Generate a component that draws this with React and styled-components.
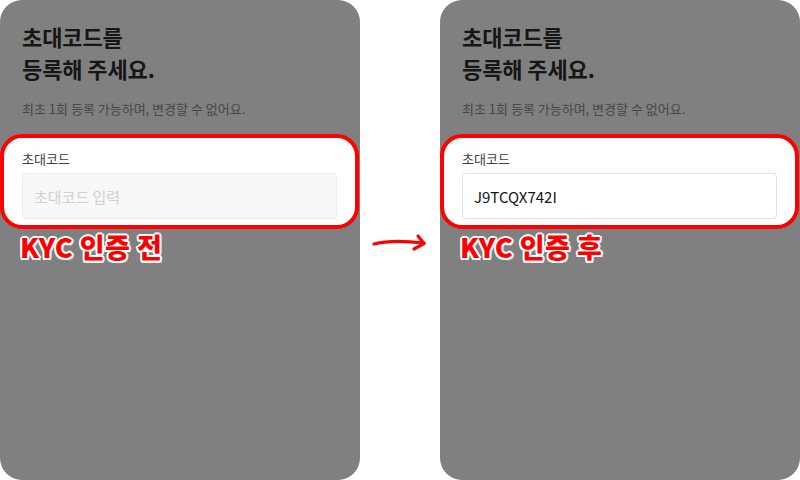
import React from "react";
import styled, { createGlobalStyle } from "styled-components";

const Global = createGlobalStyle`
  html, body { margin: 0; padding: 0; background: #ffffff; }
  body { font-family: "Noto Sans CJK KR", "Noto Sans", sans-serif; }
  * { box-sizing: border-box; }
`;

const Stage = styled.div`
  width: 800px;
  height: 480px;
  display: grid;
  grid-template-columns: 360px 80px 360px;
  background: #ffffff;
`;

const Panel = styled.section`
  height: 480px;
  background: #808080;
  border-radius: 22px;
  display: flex;
  flex-direction: column;
  padding-top: 20px;
`;

const Title = styled.h1`
  margin: 0;
  padding: 0 22px;
  font-size: 22px;
  line-height: 32px;
  font-weight: 700;
  color: #161616;
  letter-spacing: -0.1px;
`;

const Sub = styled.p`
  margin: 15px 0 0;
  padding: 0 22px;
  font-size: 13px;
  line-height: 19px;
  color: #474747;
`;

const Spot = styled.div`
  margin-top: 16px;
  width: 359px;
  background: #ffffff;
  border: 4px solid #ff0000;
  border-radius: 22px;
  padding: 11px 18px 6px;
  display: flex;
  flex-direction: column;
  gap: 5px;
`;

const Label = styled.div`
  font-size: 13px;
  line-height: 19px;
  color: #3d3d3d;
`;

const Field = styled.div`
  height: 46px;
  border-radius: 4px;
  border: 1px solid ${(p) => (p.$filled ? "#e2e2e2" : "#ececee")};
  background: ${(p) => (p.$filled ? "#ffffff" : "#f7f8f9")};
  display: flex;
  align-items: center;
  padding: 0 11px;
  font-size: 15px;
  color: ${(p) => (p.$filled ? "#141414" : "#cfd0d2")};
`;

const Tag = styled.div`
  margin: 1px 0 0 20px;
  font-size: 27px;
  line-height: 34px;
  font-weight: 900;
  color: #ff0000;
  letter-spacing: 0.4px;
  text-shadow:
    2px 0 0 #fff, -2px 0 0 #fff, 0 2px 0 #fff, 0 -2px 0 #fff,
    1.5px 1.5px 0 #fff, -1.5px 1.5px 0 #fff, 1.5px -1.5px 0 #fff, -1.5px -1.5px 0 #fff;
`;

const Gap = styled.div`
  padding-top: 233px;
  display: flex;
  justify-content: center;
`;

function Arrow() {
  return (
    <svg width="60" height="20" viewBox="0 0 60 20" style={{ marginLeft: "-6px" }}>
      <path
        d="M7 11 C 20 7.5, 40 8, 57 10"
        fill="none"
        stroke="#ff0000"
        strokeWidth="3.2"
        strokeLinecap="round"
      />
      <path
        d="M51 3 L 57 10.5 L 47 16"
        fill="none"
        stroke="#ff0000"
        strokeWidth="3.2"
        strokeLinecap="round"
        strokeLinejoin="round"
      />
    </svg>
  );
}

function Screen({ filled, tag }) {
  return (
    <Panel>
      <Title>
        초대코드를
        <br />
        등록해 주세요.
      </Title>
      <Sub>최초 1회 등록 가능하며, 변경할 수 없어요.</Sub>
      <Spot>
        <Label>초대코드</Label>
        <Field $filled={filled}>{filled ? "J9TCQX742I" : "초대코드 입력"}</Field>
      </Spot>
      <Tag>{tag}</Tag>
    </Panel>
  );
}

export default function App() {
  return (
    <>
      <Global />
      <Stage>
        <Screen filled={false} tag="KYC 인증 전" />
        <Gap>
          <Arrow />
        </Gap>
        <Screen filled tag="KYC 인증 후" />
      </Stage>
    </>
  );
}
